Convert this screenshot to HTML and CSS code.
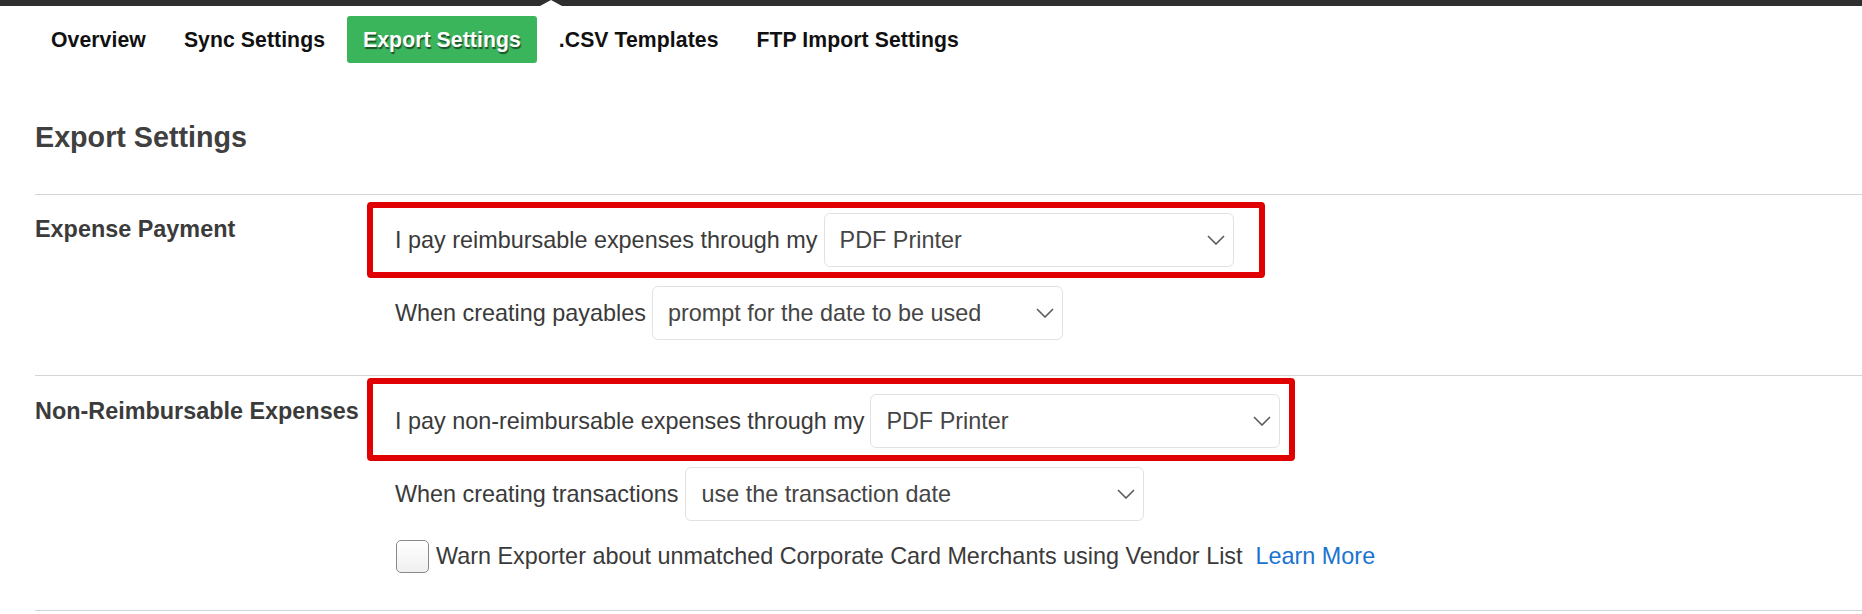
FILE: index.html
```html
<!DOCTYPE html>
<html lang="en">
<head>
<meta charset="utf-8">
<title>Export Settings</title>
<link rel="stylesheet" href="styles.css">
</head>
<body>
<div class="topbar"><span class="notch"></span></div>
<nav class="tabs">
  <a class="tab">Overview</a>
  <a class="tab">Sync Settings</a>
  <a class="tab tab--active">Export Settings</a>
  <a class="tab">.CSV Templates</a>
  <a class="tab">FTP Import Settings</a>
</nav>
<main class="content">
  <h1 class="title">Export Settings</h1>

  <section class="setting setting--payment">
    <div class="setting-label">Expense Payment</div>
    <div class="setting-body">
      <div class="field highlight highlight--first">
        <span class="field-label">I pay reimbursable expenses through my</span>
        <div class="select select--w410"><span class="select-value">PDF Printer</span><svg class="chev" viewBox="0 0 18 10" width="18" height="10"><path d="M1 1 L9 9 L17 1" fill="none" stroke="#5a5a5a" stroke-width="1.6"/></svg></div>
      </div>
      <div class="field plain plain--payables">
        <span class="field-label">When creating payables</span>
        <div class="select select--w411"><span class="select-value">prompt for the date to be used</span><svg class="chev" viewBox="0 0 18 10" width="18" height="10"><path d="M1 1 L9 9 L17 1" fill="none" stroke="#5a5a5a" stroke-width="1.6"/></svg></div>
      </div>
    </div>
  </section>

  <section class="setting setting--nonreimb">
    <div class="setting-label setting-label--second">Non-Reimbursable Expenses</div>
    <div class="setting-body">
      <div class="field highlight highlight--second">
        <span class="field-label">I pay non-reimbursable expenses through my</span>
        <div class="select select--w410"><span class="select-value">PDF Printer</span><svg class="chev" viewBox="0 0 18 10" width="18" height="10"><path d="M1 1 L9 9 L17 1" fill="none" stroke="#5a5a5a" stroke-width="1.6"/></svg></div>
      </div>
      <div class="field plain plain--transactions">
        <span class="field-label">When creating transactions</span>
        <div class="select select--w459"><span class="select-value">use the transaction date</span><svg class="chev" viewBox="0 0 18 10" width="18" height="10"><path d="M1 1 L9 9 L17 1" fill="none" stroke="#5a5a5a" stroke-width="1.6"/></svg></div>
      </div>
      <label class="field plain plain--check">
        <span class="checkbox"></span>
        <span class="check-text">Warn Exporter about unmatched Corporate Card Merchants using Vendor List</span>
        <a class="learn">Learn More</a>
      </label>
    </div>
  </section>
</main>
</body>
</html>
```

FILE: styles.css
```css
* { box-sizing: border-box; }

html, body {
  margin: 0;
  padding: 0;
  background: #ffffff;
  font-family: "Liberation Sans", Arial, Helvetica, sans-serif;
  color: #3e3e3e;
}

.topbar {
  position: relative;
  height: 6px;
  background: #2f2f2f;
}

.notch {
  position: absolute;
  left: 540px;
  top: 0;
  width: 0;
  height: 0;
  border-left: 11px solid transparent;
  border-right: 11px solid transparent;
  border-bottom: 6px solid #ffffff;
}

.tabs {
  display: flex;
  gap: 6px;
  margin: 10px 0 0 35px;
}

.tab {
  display: block;
  height: 47px;
  line-height: 47px;
  padding: 0 16px;
  font-size: 21.2px;
  letter-spacing: 0.08px;
  font-weight: bold;
  color: #111111;
  border-radius: 3px;
  white-space: nowrap;
}

.tab--active {
  background: #3bb55b;
  color: #ffffff;
  text-shadow: 1px 2px 1px rgba(0, 0, 0, 0.55);
}

.content {
  margin-left: 35px;
}

.title {
  margin: 57px 0 40px 0;
  height: 34px;
  line-height: 34px;
  font-size: 28.7px;
  font-weight: bold;
  color: #404040;
}

.setting {
  display: grid;
  grid-template-columns: 332px 1fr;
  border-top: 1px solid #d4d4d4;
}

.setting--payment {
  padding-bottom: 35px;
}

.setting--nonreimb {
  padding-bottom: 37px;
  border-bottom: 1px solid #d4d4d4;
}

.setting-label {
  margin-top: 20px;
  line-height: 28px;
  font-size: 23.4px;
  font-weight: bold;
  color: #3b3b3b;
  white-space: nowrap;
}

.setting-label--second {
  margin-top: 21px;
}

.setting-body {
  display: flex;
  flex-direction: column;
  align-items: flex-start;
}

.field {
  display: flex;
  align-items: center;
  font-size: 23.4px;
  color: #3a3a3a;
  white-space: nowrap;
}

.field-label {
  margin-right: 6px;
}

.highlight {
  border: 6px solid #e00000;
  border-radius: 4px;
}

.highlight--first {
  margin-top: 7px;
  padding: 5px 25px 5px 22px;
}

.highlight--second {
  margin-top: 2px;
  padding: 10px 9px 7px 22px;
}

.plain {
  padding-left: 28px;
}

.plain--payables {
  margin-top: 8px;
}

.plain--payables .field-label {
  margin-right: 6px;
}

.plain--transactions {
  margin-top: 6px;
}

.plain--transactions .field-label {
  margin-right: 7px;
}

.plain--check {
  margin-top: 19px;
  height: 33px;
}

.select {
  display: flex;
  align-items: center;
  justify-content: space-between;
  height: 54px;
  padding: 0 8px 0 15px;
  border: 1px solid #e2e2e2;
  border-radius: 6px;
  background: #ffffff;
  color: #454545;
}

.select--w410 { width: 410px; }
.select--w411 { width: 411px; }
.select--w459 { width: 459px; }

.chev {
  display: block;
  flex: none;
}

.checkbox {
  display: block;
  width: 33px;
  height: 33px;
  margin-left: 1px;
  margin-right: 7px;
  border: 1px solid #8a8a8a;
  border-radius: 5px;
  background: linear-gradient(#ffffff, #f0f0f0);
}

.check-text {
  color: #3a3a3a;
}

.learn {
  margin-left: 13px;
  color: #1a74cf;
}
```
